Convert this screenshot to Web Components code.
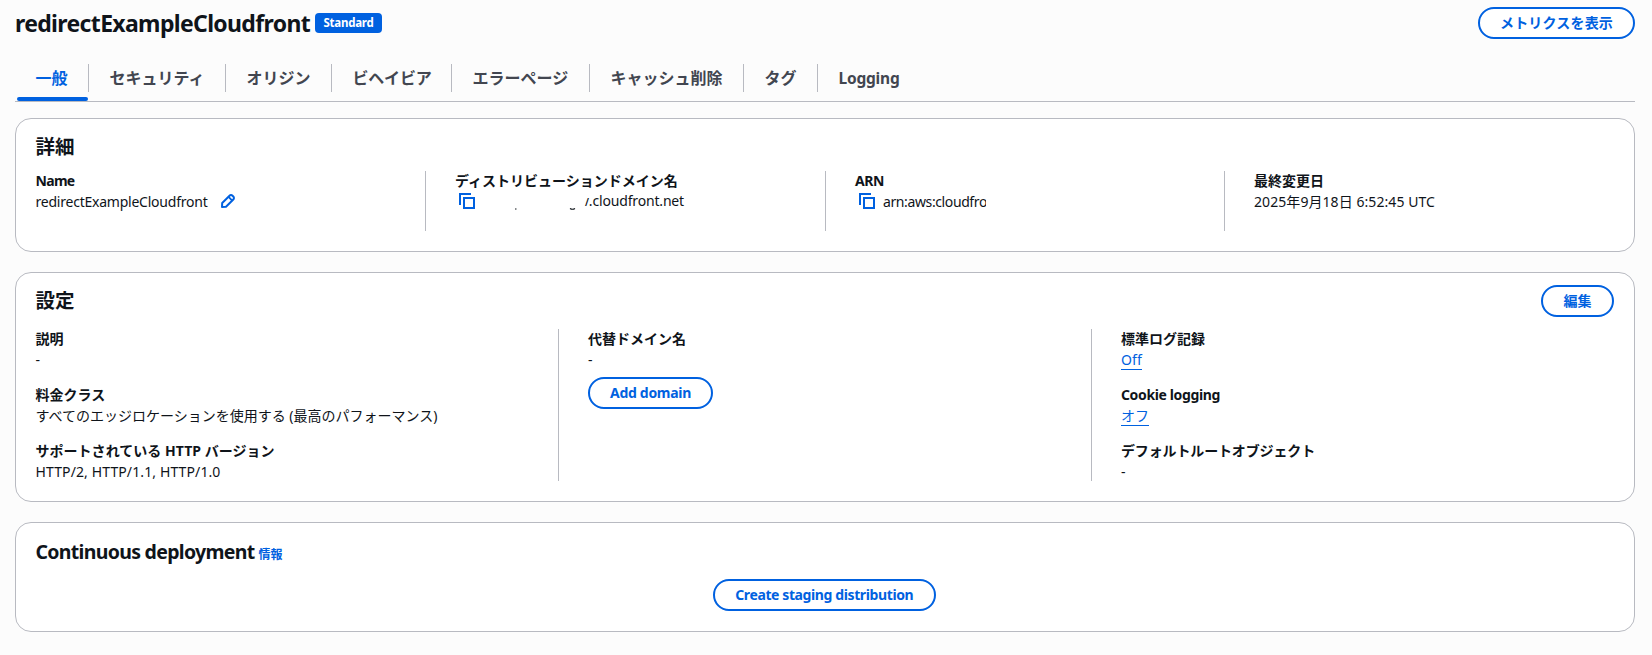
<!DOCTYPE html>
<html lang="ja">
<head>
<meta charset="utf-8">
<title>CloudFront distribution</title>
<style>
:root{--blue:#0061e0;--line:#b8bac1;--ink:#0f141a}
body{margin:0;background:#fcfcfc;color:var(--ink);font:14px/20px "Noto Sans","Noto Sans CJK JP",sans-serif}
</style>
</head>
<body>
<dist-page></dist-page>
<script>
const define=(name,html,setup)=>customElements.define(name,class extends HTMLElement{
  constructor(){
    super();
    this.attachShadow({mode:"open"}).innerHTML=html;
  }
  connectedCallback(){ if(setup) setup(this,this.shadowRoot); }
});

define("ui-button",`<style>
:host{display:inline-flex;box-sizing:border-box;height:32px;border:2px solid var(--blue);border-radius:16px;align-items:center;justify-content:center;background:#fff;color:var(--blue);font-weight:700;line-height:20px;white-space:nowrap}
</style><slot></slot>`,h=>{h.style.width=h.getAttribute("width")+"px"});

define("ui-badge",`<style>
:host{display:inline-flex;box-sizing:border-box;width:67px;height:20px;border-radius:4px;background:var(--blue);color:#fff;font-size:11.500px;font-weight:700;line-height:16px;align-items:center;justify-content:center}
</style><slot></slot>`);

define("ui-tabs",`<style>
:host{display:flex;box-sizing:border-box;height:38px;border-bottom:1px solid var(--line);padding-left:2px}
</style><slot></slot>`);

define("ui-tab",`<style>
:host{display:flex;box-sizing:border-box;height:37px;flex-direction:column;justify-content:space-between;font-size:16px;font-weight:600;color:#424650;white-space:nowrap}
.label{box-sizing:border-box;height:28px;line-height:28px;border-right:1px solid var(--line);padding-left:20.500px}
:host([active]) .label{padding-left:18.500px}
:host([last]) .label{border:0;font-weight:700;font-size:15.500px}
.bar{height:4px;border-radius:2px;margin-right:1px}
:host([active]){color:var(--blue)}
:host([active]) .bar{background:var(--blue)}
</style><div class="label"><slot></slot></div><div class="bar"></div>`,h=>{h.style.width=h.getAttribute("width")+"px"});

define("ui-card",`<style>
:host{display:block;box-sizing:border-box;border:1px solid var(--line);border-radius:16px;background:#fff;padding:12px 20px 0 19.500px}
header{display:flex;height:32px;align-items:center;justify-content:space-between}
h2{margin:0;font-size:19.500px;line-height:24px;font-weight:700}
</style><header><h2><slot name="title"></slot></h2><slot name="action"></slot></header><slot></slot>`);

define("ui-columns",`<style>
:host{display:grid;grid-auto-flow:column;grid-auto-columns:1fr;column-gap:0}
</style><slot></slot>`);

define("ui-column",`<style>
:host{display:flex;flex-direction:column;gap:16px;box-sizing:border-box;padding-left:29px;border-left:1px solid var(--line)}
:host([first]){padding-left:0;border-left:0}
</style><slot></slot>`);

define("key-value",`<style>
:host{display:block}
.k{font-weight:700;height:20px;white-space:nowrap}
.v{display:flex;height:20px;align-items:center;white-space:nowrap;padding-top:.5px;margin-bottom:-.5px}
</style><div class="k"><slot name="key"></slot></div><div class="v"><slot></slot></div>`);

define("ui-link",`<style>
:host{display:inline-block;box-sizing:border-box;color:var(--blue);height:20px;border-bottom:1px solid var(--blue)}
</style><slot></slot>`);

define("icon-copy",`<style>
:host{display:inline-flex;margin:-1px 8px 0 4px}
svg{display:block}
</style><svg width="16" height="16" viewBox="0 0 16 16" fill="none" stroke="var(--blue)" stroke-width="2"><path d="M1 12V1h11"/><path d="M5 5h10v10H5z"/></svg>`);

define("icon-edit",`<style>
:host{display:inline-flex;margin:-1px 0 0 12px}
svg{display:block}
</style><svg width="16" height="16" viewBox="0 0 16 16" fill="none" stroke="var(--blue)" stroke-width="2" stroke-linejoin="round"><path d="M2 14l.2-4 7.300-7.300a2.100 2.100 0 0 1 3 0l.8.8a2.100 2.100 0 0 1 0 3L6 13.800z"/><path d="M8.800 4.200l3.200 3.200" stroke-width="1.800"/></svg>`);

define("clip-box",`<style>
:host{display:inline-flex;overflow:hidden;height:20px}
</style><slot></slot>`,h=>{h.style.width=h.getAttribute("width")+"px"});

define("masked-id",`<style>
:host{display:block;width:102px;height:16px}
svg{display:block}
</style><svg width="102" height="16" fill="none" stroke="var(--ink)"><path d="M32 15h1.500"/><path d="M87 14.500q2.500 1.500 5 0" stroke-width="1.200"/></svg>`);

define("dist-page",`<style>
:host{display:block;padding:7px 17px 0 15px}
.top{display:flex;height:32px;align-items:center;justify-content:space-between}
.name{display:flex;align-items:center;gap:5px}
h1{margin:0;font-size:23px;line-height:30px;font-weight:700}
ui-tabs{margin:25px 0 16px}
.details{height:134px}
.settings{height:230px;margin-top:20px}
.deploy{height:110px;margin-top:20px}
.details ui-columns{margin-top:8px;height:60px;grid-template-columns:389.500px 400px 399px 1fr}
.settings ui-columns{margin-top:12px;height:152px;grid-template-columns:522.500px 533px 1fr}
.stack{display:flex;flex-direction:column;align-items:flex-start;gap:8px}
.deploy [slot=title]{display:block;padding-top:4px}
.info{font-size:12px;color:var(--blue);margin-left:4px}
.center{display:flex;justify-content:center;margin:12px 1px 0 0}
.frag{font-size:10px;font-weight:600}
</style>
<div class="top">
 <div class="name"><h1><fit-text w="295">redirectExampleCloudfront</fit-text></h1><ui-badge><fit-text w="50">Standard</fit-text></ui-badge></div>
 <ui-button width="157"><fit-text w="113">メトリクスを表示</fit-text></ui-button>
</div>
<ui-tabs>
 <ui-tab active width="72">一般</ui-tab><ui-tab width="137">セキュリティ</ui-tab><ui-tab width="106">オリジン</ui-tab><ui-tab width="120"><fit-text w="79">ビヘイビア</fit-text></ui-tab><ui-tab width="138">エラーページ</ui-tab><ui-tab width="154">キャッシュ削除</ui-tab><ui-tab width="74">タグ</ui-tab><ui-tab last width="90"><fit-text w="61">Logging</fit-text></ui-tab>
</ui-tabs>
<ui-card class="details"><span slot="title">詳細</span>
 <ui-columns>
  <ui-column first><key-value><fit-text slot="key" w="39">Name</fit-text><fit-text w="172">redirectExampleCloudfront</fit-text><icon-edit></icon-edit></key-value></ui-column>
  <ui-column><key-value><span slot="key">ディストリビューションドメイン名</span><icon-copy></icon-copy><masked-id></masked-id><fit-text w="99"><span class="frag">/</span>.cloudfront.net</fit-text></key-value></ui-column>
  <ui-column><key-value><fit-text slot="key" w="29">ARN</fit-text><icon-copy></icon-copy><clip-box width="103"><fit-text w="104">arn:aws:cloudfro</fit-text></clip-box></key-value></ui-column>
  <ui-column><key-value><span slot="key">最終変更日</span><fit-text w="181">2025年9月18日 6:52:45 UTC</fit-text></key-value></ui-column>
 </ui-columns>
</ui-card>
<ui-card class="settings"><span slot="title">設定</span><ui-button slot="action" width="73">編集</ui-button>
 <ui-columns>
  <ui-column first>
   <key-value><span slot="key">説明</span>-</key-value>
   <key-value><span slot="key">料金クラス</span><fit-text w="402">すべてのエッジロケーションを使用する (最高のパフォーマンス)</fit-text></key-value>
   <key-value><fit-text slot="key" w="239">サポートされている HTTP バージョン</fit-text><fit-text w="185">HTTP/2, HTTP/1.1, HTTP/1.0</fit-text></key-value>
  </ui-column>
  <ui-column><div class="stack"><key-value><span slot="key">代替ドメイン名</span>-</key-value><ui-button width="125"><fit-text w="81">Add domain</fit-text></ui-button></div></ui-column>
  <ui-column>
   <key-value><span slot="key">標準ログ記録</span><ui-link><fit-text w="21">Off</fit-text></ui-link></key-value>
   <key-value><fit-text slot="key" w="99">Cookie logging</fit-text><ui-link>オフ</ui-link></key-value>
   <key-value><fit-text slot="key" w="194">デフォルトルートオブジェクト</fit-text>-</key-value>
  </ui-column>
 </ui-columns>
</ui-card>
<ui-card class="deploy"><span slot="title"><fit-text w="219">Continuous deployment</fit-text><span class="info">情報</span></span>
 <div class="center"><ui-button width="223"><fit-text w="178">Create staging distribution</fit-text></ui-button></div>
</ui-card>`);

/* Tracks its text so that the run is w pixels wide. */
define("fit-text",`<style>
:host{display:inline-block;white-space:nowrap}
</style><span><slot></slot></span>`,(h,r)=>{
  const s=r.querySelector("span"),w=+h.getAttribute("w"),n=h.textContent.length;
  s.style.letterSpacing=(w-s.getBoundingClientRect().width)/n+"px";
  h.style.width=w+"px";
});
</script>
</body>
</html>
